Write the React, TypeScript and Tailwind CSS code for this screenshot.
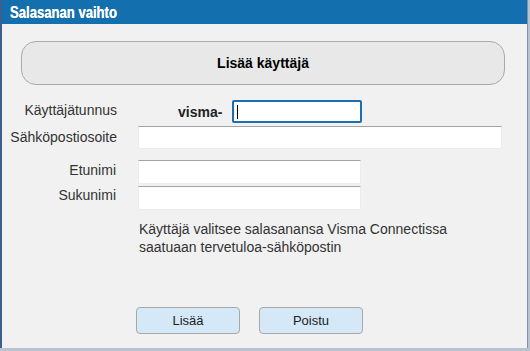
const font = { fontFamily: '"Liberation Sans", Arial, sans-serif' };

const Field = ({ width, height = 23 }: { width: number; height?: number }) => (
    <div
        className="bg-white border border-[#ececec] border-t-[#a3a3a3]"
        style={{ width, height }}
    />
);

const App = () => {
    return (
        <div className="w-[530px] h-[351px] bg-[#b9c3cf] overflow-hidden relative" style={font}>
            {/* Dialog */}
            <div className="w-[528px] h-[348px] flex flex-col bg-[#f1f1f1] border-l-2 border-r border-[#3d5f8f] border-r-[#7d93b2]">
                {/* Title bar */}
                <div className="h-[24px] bg-[#136fae] flex items-center pl-[8px]">
                    <span className="inline-block origin-left scale-x-[0.77] text-white font-bold text-[17px] leading-none whitespace-nowrap [text-shadow:0_0_0.4px_#fff]">Salasanan vaihto</span>
                </div>

                {/* Header pill */}
                <div className="ml-[19px] mt-[17px] w-[484px] h-[44px] rounded-[15px] border border-[#a9a9a9] bg-[#e8e8e8] flex items-center justify-center">
                    <span className="text-[14px] font-bold text-black mt-[1px]">Lisää käyttäjä</span>
                </div>

                {/* Username */}
                <div className="mt-[15px] flex items-center h-[23px]">
                    <div className="w-[115px] text-right text-[14px] text-[#333] -mt-[2px]">Käyttäjätunnus</div>
                    <div className="ml-[61px] w-[47px] text-[14px] font-bold text-[#222] mt-[2px]">visma-</div>
                    <div className="ml-[7px] w-[130px] h-[23px] bg-white border-2 border-[#1b6eb0] rounded-[2px] flex items-center pl-[3px]">
                        <div className="w-px h-[14px] bg-black" />
                    </div>
                </div>

                {/* Email */}
                <div className="mt-[3px] flex items-center h-[23px]">
                    <div className="w-[115px] text-right text-[14px] text-[#333] -mt-[1px]">Sähköpostiosoite</div>
                    <div className="ml-[21px]">
                        <Field width={364} />
                    </div>
                </div>

                {/* First name */}
                <div className="mt-[11px] flex items-center h-[24px]">
                    <div className="w-[114px] text-right text-[14px] text-[#333] -mt-[4px]">Etunimi</div>
                    <div className="ml-[22px]">
                        <Field width={223} height={24} />
                    </div>
                </div>

                {/* Last name */}
                <div className="mt-[2px] flex items-center h-[24px]">
                    <div className="w-[114px] text-right text-[14px] text-[#333] -mt-[5px]">Sukunimi</div>
                    <div className="ml-[22px]">
                        <Field width={223} height={24} />
                    </div>
                </div>

                {/* Info */}
                <div className="mt-[10px] ml-[137px] text-[14px] leading-[18px] text-[#333]">
                    <p>Käyttäjä valitsee salasanansa Visma Connectissa</p>
                    <p>saatuaan tervetuloa-sähköpostin</p>
                </div>

                {/* Buttons */}
                <div className="mt-auto mb-[14px] ml-[134px] flex gap-[19px]">
                    <button className="w-[104px] h-[27px] rounded-[4px] border border-[#a8a8a8] bg-[#d4e8f8] text-[13px] text-[#222]">Lisää</button>
                    <button className="w-[104px] h-[27px] rounded-[4px] border border-[#a8a8a8] bg-[#d4e8f8] text-[13px] text-[#222]">Poistu</button>
                </div>
            </div>
        </div>
    );
};

export default App;
